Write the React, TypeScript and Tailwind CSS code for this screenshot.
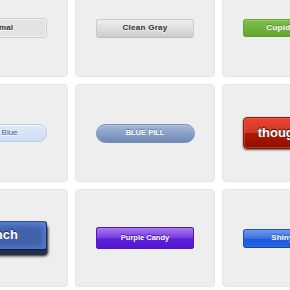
const Cell = ({ children }: { children: React.ReactNode }) => {
  return (
    <div className="flex items-center justify-center h-[98px] bg-[#eeeeee] border border-[#e6e6e6] rounded-[4px]">
      {children}
    </div>
  );
};

const App = () => {
  return (
    <div className="w-[290px] h-[290px] overflow-hidden bg-white font-['Liberation_Sans',Arial,sans-serif]">
      <div className="grid grid-cols-[repeat(3,140px)] gap-[7px] -ml-[72px] -mt-[21px]">
        <Cell>
          <button className="w-[98px] h-[20px] flex items-center justify-center bg-[#e3e3e3] border border-[#cfcfcf] rounded-[3px] shadow-[inset_0_0_1px_1px_#f3f3f3] text-[#333] text-[8px] font-bold [text-shadow:0_1px_0_#fff]">
            Minimal
          </button>
        </Cell>
        <Cell>
          <button className="w-[98px] h-[19px] flex items-center justify-center bg-linear-to-b from-[#efefef] to-[#cdcdcd] border border-[#cccccc] border-b-[#bbbbbb] rounded-[3px] text-[#333] text-[8px] font-bold tracking-[0.3px] [text-shadow:0_1px_0_#eee]">
            Clean Gray
          </button>
        </Cell>
        <Cell>
          <button className="w-[98px] h-[18px] flex items-center justify-center bg-linear-to-b from-[#7fbf4d] to-[#63a62f] border border-[#63a62f] border-b-[#5b992b] rounded-[3px] shadow-[inset_0_1px_0_0_#96ca6d] text-white text-[8px] font-bold tracking-[0.3px] [text-shadow:0_-1px_0_#4c9021]">
            Cupid Green
          </button>
        </Cell>

        <Cell>
          <button className="w-[98px] h-[18px] flex items-center justify-center bg-linear-to-b from-[#dde9f7] to-[#cfdff3] border border-[#b3c9e6] rounded-[10px] shadow-[inset_0_1px_0_0_#fff] text-[#3b5f8c] text-[8px] [text-shadow:0_1px_0_#fff]">
            Cupid Blue
          </button>
        </Cell>
        <Cell>
          <button className="w-[99px] h-[19px] flex items-center justify-center bg-linear-to-b from-[#a5b8da] to-[#7089b3] border border-[#7b8fb5] rounded-[10px] shadow-[inset_0_1px_0_0_#aec3e5] text-white text-[7.5px] font-bold uppercase [text-shadow:0_-1px_1px_#64799e]">
            Blue Pill
          </button>
        </Cell>
        <Cell>
          <button className="w-[99px] h-[32px] flex items-center justify-center bg-[linear-gradient(to_bottom,#ee432e_0%,#c63929_50%,#b51700_50%,#891100_100%)] border border-[#951100] rounded-[4px] shadow-[inset_0_0_0_1px_rgba(255,115,100,0.4),0_1px_2px_#555] text-white text-[13px] font-bold [text-shadow:0_-1px_1px_rgba(0,0,0,0.8)]">
            thoughtbot
          </button>
        </Cell>

        <Cell>
          <button className="w-[98px] h-[29px] mb-[6px] flex items-center justify-center bg-[#4162a8] border border-[#1f2d4d] border-t-[#38538c] border-b-[#151e33] rounded-[3px] shadow-[inset_0_1px_7px_1px_#5c8bee,0_1px_0_#1d2c4d,0_4px_0_#1f3053,0_5px_3px_1px_#111] text-white text-[13px] font-bold [text-shadow:0_-1px_1px_#1e2d4d]">
            Punch
          </button>
        </Cell>
        <Cell>
          <button className="w-[98px] h-[22px] flex items-center justify-center bg-[linear-gradient(to_bottom,#a877ee_0%,#7d43e4_45%,#5d1fd8_55%,#5416d4_100%)] border border-[#4a1bb5] rounded-[2px] text-white text-[7.5px] font-bold [text-shadow:0_-1px_1px_#3b0fa0]">
            Purple Candy
          </button>
        </Cell>
        <Cell>
          <button className="w-[98px] h-[19px] flex items-center justify-center bg-[linear-gradient(to_bottom,#759ae9_0%,#376fe0_50%,#1a5ad9_50%,#2463de_100%)] border border-[#1b4db3] border-t-[#1f58cc] border-b-[#174299] rounded-[3px] shadow-[inset_0_0_2px_0_rgba(57,140,255,0.8)] text-white text-[8px] font-bold [text-shadow:0_-1px_1px_#1a5ad9]">
            Shiny Blue
          </button>
        </Cell>
      </div>
    </div>
  );
};

export default App;
